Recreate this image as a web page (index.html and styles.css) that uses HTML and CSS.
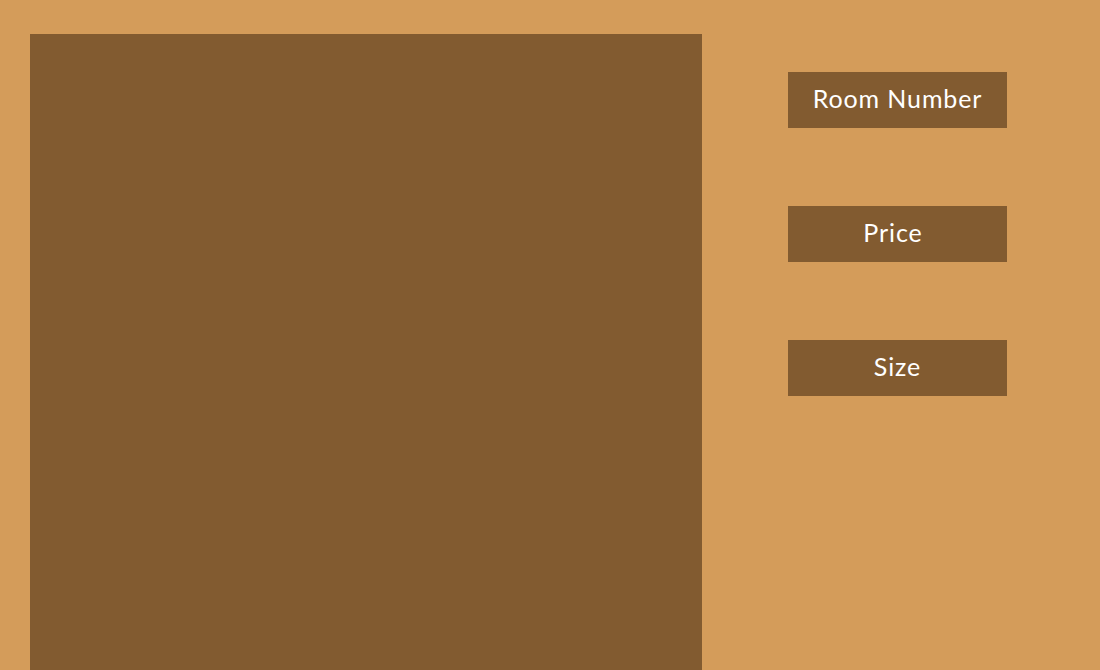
FILE: index.html
```html
<!DOCTYPE html>
<html>
<head>
<meta charset="utf-8">
<link rel="stylesheet" href="styles.css">
</head>
<body>
<div class="page">
  <div class="canvas"></div>
  <div class="controls">
    <div class="btn">Room Number</div>
    <div class="btn btn-shift">Price</div>
    <div class="btn">Size</div>
  </div>
</div>
</body>
</html>
```
FILE: styles.css
```css
html, body {
  margin: 0;
  padding: 0;
  background: #d49c5a;
  overflow: hidden;
}
.page {
  display: flex;
  padding: 34px 0 0 30px;
  height: 670px;
  box-sizing: border-box;
}
.canvas {
  width: 672px;
  height: 636px;
  background: #825b30;
  flex-shrink: 0;
}
.controls {
  display: flex;
  flex-direction: column;
  gap: 78px;
  margin-left: 86px;
  padding-top: 38px;
}
.btn {
  width: 219px;
  height: 56px;
  background: #825b30;
  color: #ffffff;
  font-family: "Lato", "Open Sans", sans-serif;
  font-size: 25px;
  font-weight: 400;
  letter-spacing: 0.9px;
  display: flex;
  align-items: center;
  justify-content: center;
  box-sizing: border-box;
  padding-bottom: 4px;
}
.btn-shift {
  padding-right: 9px;
}
```
